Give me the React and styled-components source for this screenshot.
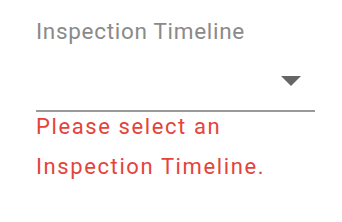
import React from 'react';
import styled, { createGlobalStyle } from 'styled-components';

const GlobalStyle = createGlobalStyle`
  html, body {
    margin: 0;
    padding: 0;
    background: #fff;
  }
  body {
    font-family: Roboto, 'Noto Sans', Arial, sans-serif;
  }
`;

const Field = styled.div`
  width: 279px;
  padding: 15px 0 0 36px;
  display: flex;
  flex-direction: column;
`;

const Label = styled.label`
  font-size: 22.5px;
  line-height: 32px;
  color: #8a8a8a;
  letter-spacing: 0.7px;
`;

const Select = styled.div`
  height: 63px;
  display: flex;
  align-items: center;
  justify-content: flex-end;
  padding-right: 14px;
  border-bottom: 2px solid #9a9a9a;
`;

const Arrow = styled.svg`
  width: 20px;
  height: 10px;
  margin-top: 4px;
  fill: #666;
`;

const Error = styled.p`
  margin: -5px 0 0;
  font-size: 22px;
  line-height: 40px;
  color: #e5433a;
  letter-spacing: 1.6px;
  width: 270px;
`;

export default function App() {
  return (
    <>
      <GlobalStyle />
      <Field>
        <Label>Inspection Timeline</Label>
        <Select>
          <Arrow viewBox="0 0 20 10">
            <path d="M0 0 L20 0 L10 10 Z" />
          </Arrow>
        </Select>
        <Error>Please select an Inspection Timeline.</Error>
      </Field>
    </>
  );
}
